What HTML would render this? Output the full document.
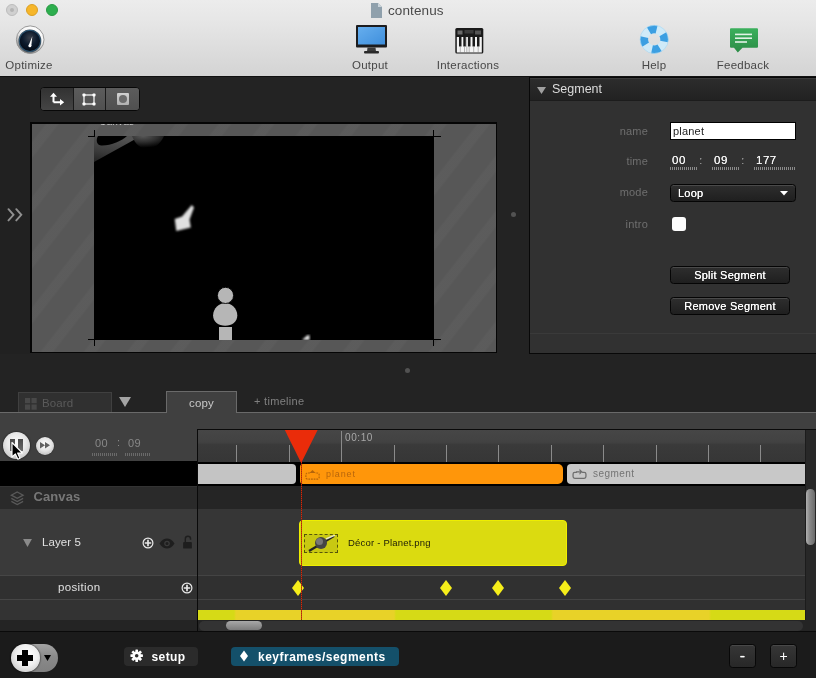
<!DOCTYPE html>
<html>
<head>
<meta charset="utf-8">
<title>contenus</title>
<style>
*{box-sizing:border-box;margin:0;padding:0}
html,body{width:816px;height:678px;overflow:hidden;background:#1d1d1d;font-family:"Liberation Sans",sans-serif;}
#app{will-change:transform;position:relative;width:816px;height:678px;overflow:hidden;background:#232323;}
.abs{position:absolute}
/* ---------- top toolbar ---------- */
#toolbar{position:absolute;left:0;top:0;width:816px;height:77px;background:linear-gradient(#ececec 0,#e6e6e6 22px,#d4d4d4 75px);border-bottom:1px solid #111;}
.tl{position:absolute;top:4px;width:12px;height:12px;border-radius:50%;}
#title{position:absolute;left:388px;top:3px;font-size:13.5px;color:#4a4a4a;letter-spacing:.1px}
.tbl{position:absolute;top:59px;font-size:11.5px;color:#474747;text-align:center;width:90px;letter-spacing:.25px}
/* ---------- stage ---------- */
#stage{position:absolute;left:0;top:77px;width:816px;height:313px;background:#232323;}
#leftstrip{position:absolute;left:0;top:0;width:30px;height:277px;background:#212121;}
#viewport{position:absolute;left:30px;top:45px;width:467px;height:231px;background:#575757;border:1px solid #050505;border-top:2px solid #050505;border-left:2px solid #050505;overflow:hidden}
#black{position:absolute;left:62px;top:12px;width:340px;height:204px;background:#000}
#tools{position:absolute;left:40px;top:10px;width:100px;height:24px;border-radius:4px;border:1px solid #080808;overflow:hidden;background:#4a4a4a;display:flex}
#tools>div{height:100%;border-right:1px solid #1a1a1a;position:relative}
/* ---------- inspector ---------- */
#insp{position:absolute;left:529px;top:0px;width:287px;height:277px;background:#313131;border-left:1px solid #080808;border-top:1px solid #080808;border-bottom:1px solid #080808}
#insph{position:absolute;left:0;top:0;width:100%;height:23px;background:linear-gradient(#2c2c2c,#222);border-top:1px solid #3a3a3a;border-bottom:1px solid #1c1c1c;}
#insph span{position:absolute;left:22px;top:3px;font-size:12.5px;color:#dcdcdc}
.lbl{position:absolute;font-size:11px;color:#6f6f6f;text-align:right;width:60px;left:58px;letter-spacing:.2px}
.btn{position:absolute;height:18px;border:1px solid #050505;border-radius:3.500px;background:linear-gradient(#2e2e2e,#1f1f1f);color:#fff;font-size:11px;text-align:center;line-height:16px;box-shadow:inset 0 1px 0 #4a4a4a;letter-spacing:.25px;text-shadow:0 0 .4px #fff}
.tm{position:absolute;top:76px;font-size:11.500px;color:#f4f4f4;letter-spacing:.5px;text-shadow:0 0 .4px #fff}
.dots{position:absolute;top:89px;height:3px;background:repeating-linear-gradient(90deg,#8a8a8a 0 1px,transparent 1px 2px)}
/* ---------- tabs ---------- */
#tabbar{position:absolute;left:0;top:390px;width:816px;height:40px;}
#tabstrip{position:absolute;left:0;top:22px;width:816px;height:18px;background:#404040;border-top:1px solid #6a6a6a}
/* ---------- timeline ---------- */
#tlarea{position:absolute;left:0;top:430px;width:816px;height:202px;background:#404040}
.row{position:absolute;left:0;width:816px}
#bottom{position:absolute;left:0;top:631px;width:816px;height:47px;background:#1b1b1b;border-top:1px solid #0a0a0a}
</style>
</head>
<body>
<div id="app">

<!-- TOOLBAR -->
<div id="toolbar">
  <div class="tl" style="left:6px;background:#d0d0d0;border:1px solid #bcbcbc"><div style="position:absolute;left:3px;top:3px;width:4px;height:4px;border-radius:50%;background:#b4b4b4"></div></div>
  <div class="tl" style="left:26px;background:#f6b62a;border:1px solid #dba023"></div>
  <div class="tl" style="left:46px;background:#2dae4e;border:1px solid #2a9a44"></div>
  <svg class="abs" style="left:370px;top:2px" width="13" height="17" viewBox="0 0 13 17"><path d="M1 1h7l4 4v11H1z" fill="#8fa0ac"/><path d="M8 1l4 4H8z" fill="#c9d3da"/></svg>
  <div id="title">contenus</div>

  <!-- optimize -->
  <svg class="abs" style="left:15px;top:24px" width="31" height="32" viewBox="0 0 31 32">
    <defs><radialGradient id="og" cx="50%" cy="35%" r="65%"><stop offset="0" stop-color="#3a3f4a"/><stop offset="0.550" stop-color="#0c1a2c"/><stop offset="1" stop-color="#050a14"/></radialGradient>
    <linearGradient id="or" x1="0.750" y1="0" x2="0.300" y2="1"><stop offset="0" stop-color="#ffffff"/><stop offset="0.400" stop-color="#f4f4f4"/><stop offset="0.750" stop-color="#b0b0b0"/><stop offset="1" stop-color="#6e6e6e"/></linearGradient></defs>
    <circle cx="15.200" cy="15.700" r="13.800" fill="url(#or)" stroke="#8e8e8e" stroke-width="0.900"/>
    <circle cx="14.900" cy="16.900" r="11.400" fill="#3a4a58"/><circle cx="14.900" cy="16.900" r="10.800" fill="#2a5878"/>
    <circle cx="14.900" cy="16.900" r="10.200" fill="url(#og)"/>
    <path d="M13.600 21.500L17.300 12.300 16.300 22z" fill="#fff"/><circle cx="14.900" cy="21.700" r="1.500" fill="#fff"/>
  </svg>
  <div class="tbl" style="left:-16px">Optimize</div>

  <!-- output -->
  <svg class="abs" style="left:355px;top:24px" width="33" height="31" viewBox="0 0 33 31">
    <defs><linearGradient id="scr" x1="0" y1="0" x2="1" y2="1"><stop offset="0" stop-color="#66aeee"/><stop offset="1" stop-color="#3f8fdc"/></linearGradient></defs>
    <rect x="1" y="1" width="31" height="22.500" rx="1" fill="#1c1c1e"/>
    <rect x="3" y="3" width="27" height="17.500" fill="url(#scr)"/>
    <path d="M12.500 23.500h8l0.500 4h-9z" fill="#3a3a3a"/>
    <rect x="9" y="27" width="15" height="2.500" rx="1" fill="#2a2a2a"/>
  </svg>
  <div class="tbl" style="left:325px">Output</div>

  <!-- interactions -->
  <svg class="abs" style="left:454px;top:27px" width="30" height="27" viewBox="0 0 30 27">
    <rect x="1.300" y="1" width="28" height="25.500" rx="1.500" fill="#1a1a1a"/>
    <rect x="3.500" y="3.500" width="5" height="4" fill="#6a6a6a"/><rect x="10.500" y="3" width="9" height="3.500" fill="#3c3c3c"/><rect x="21" y="3.500" width="6" height="4" fill="#555"/>
    <rect x="2.800" y="10" width="25" height="15.500" fill="#f4f4f4"/>
    <g fill="#1a1a1a"><rect x="5" y="10" width="2.500" height="9.500"/><rect x="9.300" y="10" width="2.500" height="9.500"/><rect x="14" y="10" width="2.500" height="9.500"/><rect x="18.500" y="10" width="2.500" height="9.500"/><rect x="23" y="10" width="2.500" height="9.500"/></g>
    <g stroke="#777" stroke-width="0.500"><path d="M6.300 19.500v6M10.500 19.500v6M12.800 10v15.500M15.200 19.500v6M19.700 19.500v6M24.200 19.500v6"/></g>
  </svg>
  <div class="tbl" style="left:423px">Interactions</div>

  <!-- help -->
  <svg class="abs" style="left:639px;top:24px" width="31" height="31" viewBox="0 0 31 31">
    <circle cx="15.200" cy="15.400" r="10.100" fill="none" stroke="#cfeaf8" stroke-width="8"/>
    <circle cx="15.200" cy="15.400" r="10.100" fill="none" stroke="#3c9fe2" stroke-width="8" stroke-dasharray="7.930 7.930" stroke-dashoffset="5.800"/>
    <circle cx="15.200" cy="15.400" r="14.100" fill="none" stroke="#a8d8f2" stroke-width="0.800" opacity="0.800"/>
  </svg>
  <div class="tbl" style="left:609px">Help</div>

  <!-- feedback -->
  <svg class="abs" style="left:729px;top:27px" width="30" height="27" viewBox="0 0 30 27">
    <defs><linearGradient id="fb" x1="0" y1="0" x2="0" y2="1"><stop offset="0" stop-color="#3bb05c"/><stop offset="1" stop-color="#2b8c46"/></linearGradient></defs>
    <path d="M2 1.200h26a1 1 0 0 1 1 1v17.500a1 1 0 0 1-1 1H13.500l-4.700 4.800-3.800-4.800H2a1 1 0 0 1-1-1v-17.500a1 1 0 0 1 1-1z" fill="url(#fb)"/>
    <rect x="6" y="6.600" width="17" height="1.600" fill="#e2f2e6"/><rect x="6" y="10.400" width="17" height="1.600" fill="#e2f2e6"/><rect x="6" y="14.200" width="12" height="1.600" fill="#e2f2e6"/>
  </svg>
  <div class="tbl" style="left:698px">Feedback</div>
</div>

<!-- STAGE -->
<div id="stage">
  <div id="leftstrip"><svg class="abs" style="left:6.500px;top:130.500px" width="16" height="14" viewBox="0 0 16 14"><path d="M1.500 1.200l5 5.600-5 5.600M9.300 1.200l5 5.600-5 5.600" fill="none" stroke="#909090" stroke-width="1.900" stroke-linecap="round"/></svg></div>
  <div id="tools">
    <div style="width:33px;background:linear-gradient(#323232,#454545)"><svg class="abs" style="left:8px;top:4px" width="16" height="13.500" viewBox="0 0 16 14.500" preserveAspectRatio="none"><path d="M4.500 11V4M4.500 11h7" stroke="#fff" stroke-width="2" fill="none"/><path d="M1 5L4.500 0.800 8 5zM11 7.500L15.200 11 11 14.500z" fill="#fff"/></svg></div>
    <div style="width:32px;background:linear-gradient(#5c5c5c,#505050)"><svg class="abs" style="left:8px;top:5px" width="14" height="13" viewBox="0 0 14 13"><rect x="2" y="2" width="10" height="9" fill="none" stroke="#fff" stroke-width="1.200"/><g fill="#fff"><rect x="0.500" y="0.500" width="3" height="3" rx="0.800"/><rect x="10.500" y="0.500" width="3" height="3" rx="0.800"/><rect x="0.500" y="9.500" width="3" height="3" rx="0.800"/><rect x="10.500" y="9.500" width="3" height="3" rx="0.800"/></g></svg></div>
    <div style="width:33px;background:linear-gradient(#5c5c5c,#505050);border-right:0"><div class="abs" style="left:11px;top:5px;width:12px;height:12px;background:linear-gradient(#d2d2d2,#b0b0b0);border-radius:1px"><div class="abs" style="left:2px;top:2px;width:8px;height:8px;border-radius:50%;background:#6c6c6c"></div></div></div>
  </div>
  <div id="viewport">
    <div class="abs" style="left:0;top:0;width:100%;height:100%;background:repeating-linear-gradient(128deg,rgba(255,255,255,0) 0,rgba(255,255,255,0) 10px,rgba(255,255,255,.028) 12px,rgba(255,255,255,.028) 20px,rgba(255,255,255,0) 22px,rgba(255,255,255,0) 34px)"></div>
    <span class="abs" style="left:67px;top:-7px;font-size:10px;color:#c8c8c8;letter-spacing:.2px;line-height:10px">Canvas</span>
    <div id="black">
      <svg width="340" height="204" viewBox="0 0 340 204" style="position:absolute;left:0;top:0">
        <defs>
          <linearGradient id="ring" x1="0.300" y1="0" x2="0" y2="1"><stop offset="0" stop-color="#525252"/><stop offset="0.600" stop-color="#3a3a3a"/><stop offset="1" stop-color="#222"/></linearGradient>
          <radialGradient id="pl" cx="35%" cy="0%" r="90%"><stop offset="0" stop-color="#585858"/><stop offset="0.500" stop-color="#303030"/><stop offset="1" stop-color="#000"/></radialGradient>
          <filter id="bl"><feGaussianBlur stdDeviation="0.800"/></filter>
        </defs>
        <path d="M0 0H47L0 26z" fill="url(#ring)"/>
        <path d="M4 0H33C28 5 16 10 7 9.500C2 9 2 3 4 0z" fill="#000"/>
        <path d="M38 0H70C66 9 59 13 53 13C47 13 41 8 38 0z" fill="url(#pl)"/>
        <path d="M97.800 69L100 71.500L95.500 83.500L96.800 91.500L82.300 95L80.700 83L88 80.500z" fill="#e0e0e0" filter="url(#bl)"/>
        <path d="M131.200 167C137 167 143.300 172 143.300 179.500C143.300 186 138 189.800 131.200 189.800C124.400 189.800 119.100 186 119.100 179.500C119.100 172 125.400 167 131.200 167z" fill="#b6b6b6"/>
        <circle cx="131.500" cy="159.400" r="8.100" fill="#b6b6b6" stroke="#000" stroke-width="0.900"/>
        <rect x="125" y="191" width="13" height="13" fill="#b6b6b6"/>
        <path d="M208 204L213 199.500L215.500 199L215.500 204z" fill="#e4e4e4" filter="url(#bl)"/>
      </svg>
    </div>
    <!-- crop marks -->
    <div class="abs" style="left:56px;top:12px;width:7px;height:1px;background:#000"></div>
    <div class="abs" style="left:62px;top:6px;width:1px;height:7px;background:#000"></div>
    <div class="abs" style="left:401px;top:12px;width:8px;height:1px;background:#000"></div>
    <div class="abs" style="left:401px;top:6px;width:1px;height:7px;background:#000"></div>
    <div class="abs" style="left:56px;top:215px;width:7px;height:1px;background:#000"></div>
    <div class="abs" style="left:62px;top:215px;width:1px;height:7px;background:#000"></div>
    <div class="abs" style="left:401px;top:215px;width:8px;height:1px;background:#000"></div>
    <div class="abs" style="left:401px;top:215px;width:1px;height:7px;background:#000"></div>
  </div>
  <div class="abs" style="left:510.500px;top:135px;width:5px;height:5px;border-radius:50%;background:#525252"></div>
  <div class="abs" style="left:404.500px;top:291px;width:5px;height:5px;border-radius:50%;background:#525252"></div>

  <div id="insp">
    <div id="insph"><svg class="abs" style="left:7px;top:7.500px" width="9" height="7" viewBox="0 0 9 8" preserveAspectRatio="none"><path d="M0 0h9L4.500 8z" fill="#a0a0a0"/></svg><span>Segment</span></div>
    <div class="lbl" style="top:47px">name</div>
    <div class="abs" style="left:140px;top:44px;width:126px;height:18px;background:#fff;border:1px solid #000;font-size:11px;color:#222;line-height:16px;padding-left:2px;letter-spacing:.2px">planet</div>
    <div class="lbl" style="top:77px">time</div>
    <span class="tm" style="left:142px">00</span><span class="tm" style="left:169px;color:#8a8a8a">:</span><span class="tm" style="left:184px">09</span><span class="tm" style="left:211px;color:#8a8a8a">:</span><span class="tm" style="left:226px">177</span>
    <div class="dots" style="left:140px;width:27px"></div><div class="dots" style="left:182px;width:27px"></div><div class="dots" style="left:224px;width:42px"></div>
    <div class="lbl" style="top:108px">mode</div>
    <div class="btn" style="left:140px;top:106px;width:126px;text-align:left;padding-left:7px">Loop<svg class="abs" style="right:7.500px;top:6px" width="8" height="4.500" viewBox="0 0 9 5"><path d="M0 0h9L4.500 5z" fill="#fff"/></svg></div>
    <div class="lbl" style="top:140px">intro</div>
    <div class="abs" style="left:142px;top:139px;width:14px;height:14px;background:#fdfdfd;border-radius:3px"></div>
    <div class="btn" style="left:140px;top:188px;width:120px">Split Segment</div>
    <div class="btn" style="left:140px;top:219px;width:120px">Remove Segment</div>
    <div class="abs" style="left:0;top:255px;width:100%;height:1px;background:#3a3a3a"></div>
  </div>
</div>

<!-- TABS -->
<div id="tabbar">
  <div id="tabstrip"></div>
  <div class="abs" style="left:18px;top:2px;width:94px;height:20px;background:#303030;border:1px solid #404040;border-bottom:0">
    <svg class="abs" style="left:6px;top:5px" width="12" height="12" viewBox="0 0 12 12"><g fill="#484848"><rect x="0" y="0" width="5.200" height="5.200"/><rect x="6.500" y="0" width="5.200" height="5.200"/><rect x="0" y="6.500" width="5.200" height="5.200"/><rect x="6.500" y="6.500" width="5.200" height="5.200"/></g></svg>
    <span class="abs" style="left:23px;top:4px;font-size:11.500px;color:#5a5a5a;letter-spacing:.1px">Board</span>
  </div>
  <svg class="abs" style="left:119px;top:7px" width="12" height="10" viewBox="0 0 12 10"><path d="M0 0h12L6 10z" fill="#a4a4a4"/></svg>
  <div class="abs" style="left:166px;top:1px;width:71px;height:22px;background:#404040;border:1px solid #6a6a6a;border-bottom:0;color:#c8c8c8;font-size:11.500px;text-align:center;line-height:22px;letter-spacing:.2px">copy</div>
  <span class="abs" style="left:254px;top:5px;font-size:11px;color:#808080;letter-spacing:.3px">+ timeline</span>
</div>

<!-- TIMELINE -->
<div id="tlarea">
  <!-- left column -->
  <div class="abs" style="left:0;top:31px;width:197px;height:25px;background:#000"></div>
  <div class="abs" style="left:0;top:56px;width:197px;height:23px;background:#2a2a2a;border-top:1px solid #333"></div>
  <div class="abs" style="left:0;top:79px;width:197px;height:67px;background:#3a3a3a;border-bottom:1px solid #464646"></div>
  <div class="abs" style="left:0;top:146px;width:197px;height:24px;background:#303030;border-bottom:1px solid #464646"></div>
  <div class="abs" style="left:0;top:170px;width:197px;height:20px;background:#333"></div>
  <div class="abs" style="left:0;top:190px;width:816px;height:12px;background:#242424"></div>
  <div class="abs" style="left:197px;top:-1px;width:1px;height:202px;background:#0a0a0a"></div>

  <!-- transport -->
  <div class="abs" style="left:2.500px;top:1.500px;width:27.500px;height:27.500px;border-radius:50%;background:radial-gradient(circle at 50% 40%,#fdfdfd 0,#e8e8e8 45%,#b4b4b4 100%);box-shadow:0 0 2px rgba(0,0,0,.8)"></div>
  <div class="abs" style="left:10px;top:9.200px;width:4.500px;height:11.500px;background:linear-gradient(#4a4a4a,#6a6a6a)"></div>
  <div class="abs" style="left:17.500px;top:9.200px;width:5px;height:11.500px;background:linear-gradient(#4a4a4a,#6a6a6a)"></div>
  <svg class="abs" style="left:11px;top:10.500px" width="13" height="19" viewBox="0 0 13 19"><path d="M1 1.500v14.500l3.400-3.100 2.500 5.400 2.100-1-2.400-5.300h4.800z" fill="#000" stroke="#fff" stroke-width="1.100" stroke-linejoin="round"/></svg>
  <div class="abs" style="left:36px;top:6.700px;width:18px;height:18px;border-radius:50%;background:radial-gradient(circle at 50% 40%,#fdfdfd 0,#e2e2e2 50%,#a8a8a8 100%);box-shadow:0 0 1px rgba(0,0,0,.8)"></div>
  <svg class="abs" style="left:40.300px;top:12.400px" width="10" height="6.500" viewBox="0 0 10 6.500"><path d="M0 0l5 3.250-5 3.250zM5 0l5 3.250-5 3.250z" fill="#606060"/></svg>
  <span class="abs" style="left:95px;top:7px;font-size:11px;color:#888;letter-spacing:.5px">00</span>
  <span class="abs" style="left:117px;top:6px;font-size:11px;color:#888">:</span>
  <span class="abs" style="left:128px;top:7px;font-size:11px;color:#888;letter-spacing:.5px">09</span>
  <div class="abs" style="left:92px;top:23px;width:26px;height:3px;background:repeating-linear-gradient(90deg,#6a6a6a 0 1px,transparent 1px 2px)"></div>
  <div class="abs" style="left:125px;top:23px;width:26px;height:3px;background:repeating-linear-gradient(90deg,#6a6a6a 0 1px,transparent 1px 2px)"></div>

  <!-- canvas row -->
  <svg class="abs" style="left:10px;top:60.500px" width="14.500" height="15" viewBox="0 0 16 15" preserveAspectRatio="none"><g fill="none" stroke="#5a5a5a" stroke-width="1.300"><path d="M8 1l6.500 3.200L8 7.400 1.500 4.200z"/><path d="M1.500 7.400L8 10.600l6.500-3.200"/><path d="M1.500 10.400L8 13.600l6.500-3.200"/></g></svg>
  <span class="abs" style="left:33.500px;top:59px;font-size:13px;font-weight:bold;color:#777;letter-spacing:.1px">Canvas</span>
  <!-- layer row -->
  <svg class="abs" style="left:23px;top:109px" width="9" height="8" viewBox="0 0 10 9"><path d="M0 0h10L5 9z" fill="#8a8a8a"/></svg>
  <span class="abs" style="left:42px;top:106px;font-size:11.500px;color:#e0e0e0;letter-spacing:.1px">Layer 5</span>
  <svg class="abs" style="left:141.500px;top:106.500px" width="12" height="12" viewBox="0 0 13 13"><circle cx="6.500" cy="6.500" r="5.300" fill="none" stroke="#e8e8e8" stroke-width="1.300"/><path d="M6.500 3v7M3 6.500h7" stroke="#e8e8e8" stroke-width="1.800"/></svg>
  <svg class="abs" style="left:159px;top:108px" width="16" height="11" viewBox="0 0 16 11"><path d="M0.500 5.500C3 1.500 5.500 0.500 8 0.500s5 1 7.500 5C13 9.500 10.500 10.500 8 10.500s-5-1-7.500-5z" fill="#1e1e1e"/><circle cx="8" cy="5.500" r="2.800" fill="#3a3a3a"/><circle cx="8" cy="5.500" r="1.500" fill="#1e1e1e"/></svg>
  <svg class="abs" style="left:181.500px;top:105px" width="11" height="14" viewBox="0 0 12 16"><path d="M3.500 8V4.500a3 3 0 0 1 6 0V5.500" fill="none" stroke="#1e1e1e" stroke-width="1.600"/><rect x="1" y="8" width="10" height="7.500" rx="1" fill="#1e1e1e"/></svg>
  <!-- position row -->
  <span class="abs" style="left:58px;top:151px;font-size:11.500px;color:#e0e0e0;letter-spacing:.35px">position</span>
  <svg class="abs" style="left:181px;top:151.500px" width="12" height="12" viewBox="0 0 13 13"><circle cx="6.500" cy="6.500" r="5.300" fill="none" stroke="#e8e8e8" stroke-width="1.300"/><path d="M6.500 3v7M3 6.500h7" stroke="#e8e8e8" stroke-width="1.800"/></svg>

  <!-- right tracks -->
  <div class="abs" style="left:198px;top:-1px;width:618px;height:33px;background:linear-gradient(#464646 0,#424242 38%,#3a3a3a 46%,#363636 100%);border-top:1px solid #0a0a0a"></div>
  <div class="abs" style="left:198px;top:32px;width:607px;height:24px;background:#000"></div>
  <div class="abs" style="left:198px;top:56px;width:607px;height:23px;background:#252525"></div>
  <div class="abs" style="left:198px;top:79px;width:607px;height:67px;background:#363636;border-bottom:1px solid #444"></div>
  <div class="abs" style="left:198px;top:146px;width:607px;height:24px;background:#303030;border-bottom:1px solid #444"></div>
  <div class="abs" style="left:198px;top:170px;width:607px;height:10px;background:#303030"></div>
  <div class="abs" style="left:805px;top:0px;width:11px;height:190px;background:#282828;border-left:1px solid #1c1c1c"></div>
  <div class="abs" style="left:806.300px;top:59px;width:8.700px;height:56px;border-radius:4.300px;background:linear-gradient(90deg,#b0b0b0,#8a8a8a 40%,#6a6a6a)"></div>
  <!-- ticks -->
  <div class="abs" style="left:236px;top:15px;width:1px;height:17px;background:#8a8a8a"></div><div class="abs" style="left:289px;top:15px;width:1px;height:17px;background:#8a8a8a"></div><div class="abs" style="left:341px;top:1px;width:1px;height:31px;background:#8a8a8a"></div><div class="abs" style="left:394px;top:15px;width:1px;height:17px;background:#8a8a8a"></div><div class="abs" style="left:446px;top:15px;width:1px;height:17px;background:#8a8a8a"></div><div class="abs" style="left:498px;top:15px;width:1px;height:17px;background:#8a8a8a"></div><div class="abs" style="left:551px;top:15px;width:1px;height:17px;background:#8a8a8a"></div><div class="abs" style="left:603px;top:15px;width:1px;height:17px;background:#8a8a8a"></div><div class="abs" style="left:656px;top:15px;width:1px;height:17px;background:#8a8a8a"></div><div class="abs" style="left:708px;top:15px;width:1px;height:17px;background:#8a8a8a"></div><div class="abs" style="left:760px;top:15px;width:1px;height:17px;background:#8a8a8a"></div>
  <span class="abs" style="left:345px;top:2px;font-size:10px;color:#a8a8a8;letter-spacing:.6px">00:10</span>
  <!-- segments -->
  <div class="abs" style="left:198px;top:34px;width:98px;height:20px;background:#c4c4c4;border-radius:0 4px 4px 0"></div>
  <div class="abs" style="left:300px;top:34px;width:263px;height:20px;background:#ff960a;border-radius:3px 5px 5px 3px"></div>
  <svg class="abs" style="left:303.500px;top:38.500px" width="17" height="11.500" viewBox="0 0 18 13"><path d="M6 4.500H3.500a2 2 0 0 0-2 2v3a2 2 0 0 0 2 2h11a2 2 0 0 0 2-2v-3a2 2 0 0 0-2-2H12" fill="none" stroke="#b4640a" stroke-width="1.300" stroke-dasharray="2 1"/><path d="M9 1l3.500 3.500h-7z" fill="#b4640a"/></svg>
  <span class="abs" style="left:326px;top:39px;font-size:9px;color:#b8660c;letter-spacing:.9px">planet</span>
  <div class="abs" style="left:567px;top:34px;width:238px;height:20px;background:#c8c8c8;border-radius:4px 0 0 4px"></div>
  <svg class="abs" style="left:570.500px;top:38px" width="17" height="12" viewBox="0 0 18 14"><path d="M6 5H3.500a2 2 0 0 0-2 2v3a2 2 0 0 0 2 2h11a2 2 0 0 0 2-2V7a2 2 0 0 0-2-2H12" fill="none" stroke="#6e6e6e" stroke-width="1.500"/><path d="M9 1l3.500 3.500-3.500 3.500z" fill="#6e6e6e"/><path d="M5 4.500h4" stroke="#6e6e6e" stroke-width="1.500"/></svg>
  <span class="abs" style="left:593px;top:38px;font-size:10px;color:#747474;letter-spacing:.45px">segment</span>
  <!-- clip -->
  <div class="abs" style="left:298.500px;top:90px;width:268.500px;height:46px;background:#dbdb10;border:1px solid #eeee00;border-radius:4px"></div>
  <div class="abs" style="left:304px;top:104px;width:34px;height:19px;border:1px dashed #55550a;background:#c8c812;overflow:hidden">
    <svg width="34" height="19" viewBox="0 0 34 19" style="position:absolute;left:-1px;top:-1px"><path d="M5 17L30 2" stroke="#222" stroke-width="2.200"/><path d="M22 5L31 1" stroke="#e8e8c0" stroke-width="1.500"/><circle cx="17" cy="9" r="6" fill="#444"/><circle cx="15.500" cy="7.500" r="3.500" fill="#777"/></svg>
  </div>
  <span class="abs" style="left:348px;top:106.500px;font-size:9.500px;color:#1c1c08;letter-spacing:.2px">Décor - Planet.png</span>
  <!-- keyframes -->
  <svg class="abs" style="left:291px;top:148.500px" width="14" height="18" viewBox="0 0 14 18"><path d="M7 1l6 8-6 8-6-8z" fill="#f6ee1a"/></svg>
  <svg class="abs" style="left:439px;top:148.500px" width="14" height="18" viewBox="0 0 14 18"><path d="M7 1l6 8-6 8-6-8z" fill="#f6ee1a"/></svg>
  <svg class="abs" style="left:491px;top:148.500px" width="14" height="18" viewBox="0 0 14 18"><path d="M7 1l6 8-6 8-6-8z" fill="#f6ee1a"/></svg>
  <svg class="abs" style="left:558px;top:148.500px" width="14" height="18" viewBox="0 0 14 18"><path d="M7 1l6 8-6 8-6-8z" fill="#f6ee1a"/></svg>
  <!-- bottom yellow strip -->
  <div class="abs" style="left:198px;top:180px;width:607px;height:10px;background:linear-gradient(90deg,#d6da16 0,#d6da16 36px,#e8d228 38px,#e8d228 196px,#d6da16 198px,#d6da16 353px,#e8d228 355px,#e8d228 511px,#d6da16 513px,#d6da16 100%)"></div>
  <!-- scrollbar -->
  <div class="abs" style="left:199px;top:190.500px;width:604px;height:10px;border-radius:5px;background:#333"></div>
  <div class="abs" style="left:226px;top:191px;width:36px;height:9px;border-radius:4.500px;background:linear-gradient(#a8a8a8,#7c7c7c)"></div>
  <!-- playhead -->
  <div class="abs" style="left:300.500px;top:20px;width:1.500px;height:170px;background:repeating-linear-gradient(rgba(220,40,10,.95) 0 1px,rgba(130,30,8,.8) 1px 2px)"></div>
  <svg class="abs" style="left:284px;top:0" width="34" height="34" viewBox="0 0 34 34"><path d="M0.800 0h32.800L17.200 33z" fill="#ea2c0a"/></svg>
</div>

<div id="bottom">
  <div class="abs" style="left:20px;top:11.5px;width:38px;height:28.500px;border-radius:14px;background:linear-gradient(#a4a4a4,#8a8a8a 45%,#808080)"></div>
  <div class="abs" style="left:11px;top:11.5px;width:28.500px;height:28.500px;border-radius:50%;background:radial-gradient(circle at 55% 40%,#fff 0,#f0f0f0 45%,#b8b8b8 100%);box-shadow:0 0 2px #000"></div>
  <div class="abs" style="left:17px;top:23.2px;width:16px;height:5.400px;background:#000"></div>
  <div class="abs" style="left:22.300px;top:18px;width:5.400px;height:16px;background:#000"></div>
  <svg class="abs" style="left:44px;top:23px" width="7" height="6" viewBox="0 0 7 6"><path d="M0 0h7L3.500 6z" fill="#000"/></svg>
  <div class="abs" style="left:124px;top:15px;width:74px;height:19px;border-radius:4px;background:#2b2b2b"></div>
  <svg class="abs" style="left:130px;top:17.2px" width="13.400" height="13.400" viewBox="-7.500 -7.500 15 15"><g fill="#fff"><circle r="4.800"/><g id="tooth"><rect x="-1.500" y="-7" width="3" height="14" rx="0.500"/></g><rect x="-1.500" y="-7" width="3" height="14" rx="0.500" transform="rotate(45)"/><rect x="-1.500" y="-7" width="3" height="14" rx="0.500" transform="rotate(90)"/><rect x="-1.500" y="-7" width="3" height="14" rx="0.500" transform="rotate(135)"/></g><circle r="2" fill="#2c2c2c"/></svg>
  <span class="abs" style="left:151.500px;top:15px;font-size:12px;font-weight:bold;color:#fff;line-height:20px;letter-spacing:.4px">setup</span>
  <div class="abs" style="left:231px;top:15px;width:168px;height:19px;border-radius:4px;background:#14506a"></div>
  <svg class="abs" style="left:239px;top:18px" width="10" height="12" viewBox="0 0 10 12"><path d="M5 0.500l4 5.500-4 5.500-4-5.500z" fill="#fff"/></svg>
  <span class="abs" style="left:258px;top:15px;font-size:12px;font-weight:bold;color:#fff;line-height:20px;letter-spacing:.5px">keyframes/segments</span>
  <div class="abs" style="left:729px;top:12px;width:27px;height:24px;border-radius:3.500px;background:linear-gradient(#363636,#282828);border:1px solid #080808;box-shadow:inset 0 1px 0 #484848;color:#fff;text-align:center;font-size:16px;line-height:21px;text-shadow:0 0 .5px #fff">-</div>
  <div class="abs" style="left:770px;top:12px;width:27px;height:24px;border-radius:3.500px;background:linear-gradient(#363636,#282828);border:1px solid #080808;box-shadow:inset 0 1px 0 #484848;color:#fff;text-align:center;font-size:14px;line-height:23.500px">+</div>
</div>
</div>
</body>
</html>
